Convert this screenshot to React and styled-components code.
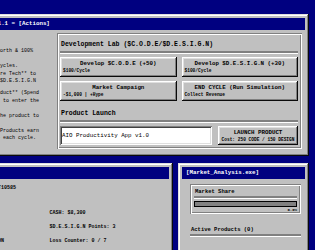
import React from "react";
import styled, { createGlobalStyle } from "styled-components";

const GlobalStyle = createGlobalStyle`
  *, *::before, *::after { box-sizing: border-box; }
  html, body { margin: 0; padding: 0; background: #000080; }
  body { font-family: "Liberation Mono", "DejaVu Sans Mono", monospace; color: #000; }
`;

const Desktop = styled.main`
  width: 315px;
  height: 250px;
  overflow: hidden;
  background: #000080;
  padding-top: 14px;
`;

const Stage = styled.div`
  width: 386px;
  margin-left: -77px;
  display: flex;
  flex-direction: column;
  gap: 7px;
`;

const BottomRow = styled.div`
  display: grid;
  grid-template-columns: 1fr 131px;
  gap: 5px;
  align-items: start;
`;

const Window = styled.section`
  background: #c0c0c0;
  padding: 4px;
  min-height: ${(p) => p.$minH || 0}px;
  box-shadow: inset -1px -1px #0a0a0a, inset 1px 1px #dfdfdf,
    inset -2px -2px #808080, inset 2px 2px #ffffff;
`;

const TitleBar = styled.header`
  height: 12px;
  background: #000080;
  color: #fff;
  display: flex;
  align-items: center;
  gap: 3px;
  padding: 0 4px;
  font-size: 5.8px;
  font-weight: bold;
  line-height: 12px;
  white-space: nowrap;
  overflow: hidden;
`;

const TopBody = styled.div`
  padding: 3px;
  display: grid;
  grid-template-columns: 1fr 245px;
  gap: 3px;
`;

const Manual = styled.div`
  padding-left: 4px;
  font-size: 5px;
  line-height: 7.5px;
  overflow: hidden;
`;

const ManualPara = styled.p`
  margin: 0 0 4.5px;
  white-space: pre;
`;

const Panel = styled.div`
  padding: ${(p) => p.$pad};
  box-shadow: inset 1px 1px #808080, inset -1px -1px #ffffff,
    inset 2px 2px #ffffff, inset -2px -2px #808080;
`;

const SectionTitle = styled.h3`
  margin: ${(p) => p.$mt || 0}px 0 ${(p) => p.$mb ?? 4}px;
  padding: 0 0 ${(p) => p.$pb ?? 2}px 1px;
  font-size: ${(p) => p.$size || 6.5}px;
  line-height: ${(p) => p.$lh || 9}px;
  font-weight: bold;
  white-space: nowrap;
  border-bottom: 2px solid #808080;
  box-shadow: 0 1px 0 #ffffff;
`;

const ButtonGrid = styled.div`
  display: grid;
  grid-template-columns: 1fr 1fr;
  gap: 4px 5px;
`;

const Button = styled.button`
  all: unset;
  box-sizing: border-box;
  height: ${(p) => p.$h || 20}px;
  padding: 3px 3px;
  display: flex;
  flex-direction: column;
  background: #c0c0c0;
  font-family: "Liberation Mono", "DejaVu Sans Mono", monospace;
  color: #000;
  cursor: pointer;
  box-shadow: inset -1px -1px #0a0a0a, inset 1px 1px #ffffff,
    inset -2px -2px #808080, inset 2px 2px #dfdfdf;
`;

const ButtonLabel = styled.span`
  font-size: 5.8px;
  line-height: 8px;
  font-weight: bold;
  text-align: center;
  white-space: nowrap;
`;

const ButtonNote = styled.span`
  font-size: 4.5px;
  line-height: 6px;
  font-weight: bold;
  text-align: ${(p) => p.$align || "left"};
  white-space: nowrap;
`;

const LaunchRow = styled.div`
  display: grid;
  grid-template-columns: 1fr 80px;
  gap: 6px;
`;

const NameField = styled.input`
  height: 19px;
  width: 100%;
  border: none;
  outline: none;
  background: #ffffff;
  padding: 0 2px;
  font-family: "Liberation Mono", "DejaVu Sans Mono", monospace;
  font-size: 5.8px;
  color: #000;
  box-shadow: inset 1px 1px #808080, inset -1px -1px #ffffff,
    inset 2px 2px #404040, inset -2px -2px #dfdfdf;
`;

const StatsBody = styled.div`
  padding: 5px 2px 0 5px;
  font-size: 5px;
  line-height: 8px;
  font-weight: bold;
  white-space: nowrap;
`;

const StatsGrid = styled.div`
  margin-top: 17px;
  display: grid;
  grid-template-columns: 1fr 1fr;
  row-gap: 6px;
`;

const MarketBody = styled.div`
  padding: 5px 4px 0 8px;
`;

const Meter = styled.div`
  height: 6px;
  background: #808080;
  border: 1px solid #000;
`;

const MeterFill = styled.div`
  height: 100%;
  background: #000080;
`;

const MeterValue = styled.div`
  font-size: 4px;
  line-height: 6px;
  font-weight: bold;
  text-align: right;
`;

const WinIcon = () => (
  <svg width="8" height="8" viewBox="0 0 8 8" aria-hidden="true">
    <rect x="0.5" y="0.5" width="7" height="7" fill="#c0c0c0" stroke="#fff" />
    <rect x="1.5" y="2.5" width="5" height="4" fill="#008080" />
  </svg>
);

const paraOne = [
  "README.TXT",
  "----------",
  "Goal: reach $10M net worth & 100%",
  "market share.",
  "You have a max of 50 cycles.",
  "1. Use cash to **Acquire Tech** to",
  "   build $C.O.D.E and $D.E.S.I.G.N",
].join("\n");

const paraTwo = [
  "2. Do the **Launch Product** (Spend",
  "   code & design pts.) to enter the",
  "   market.",
  "3. Choose a name for the product to",
  "   release it.",
  "4. Once launched, all Products earn",
  "   cash revenue & hype each cycle.",
].join("\n");

const actions = [
  { label: "Develop $C.O.D.E (+50)", note: "$100/Cycle" },
  { label: "Develop $D.E.S.I.G.N (+30)", note: "$100/Cycle" },
  { label: "Market Campaign", note: "-$1,000 | +Hype" },
  { label: "END CYCLE (Run Simulation)", note: "Collect Revenue" },
];

const stats = [
  ["Cycle: 1", "CASH: $8,300"],
  ["$C.O.D.E Points: 5", "$D.E.S.I.G.N Points: 3"],
  ["Phase: STEALTH OPERATION", "Loss Counter: 0 / 7"],
];

export default function App() {
  const share = 0;
  return (
    <>
      <GlobalStyle />
      <Desktop>
        <Stage>
          <Window>
            <TitleBar>
              <WinIcon />
              <span>Startup_Tycoon_v1.1 = [Actions]</span>
            </TitleBar>
            <TopBody>
              <Manual>
                <ManualPara>{paraOne}</ManualPara>
                <ManualPara>{paraTwo}</ManualPara>
              </Manual>
              <Panel $pad="7px 4px 4px 3px">
                <SectionTitle>Development Lab ($C.O.D.E/$D.E.S.I.G.N)</SectionTitle>
                <ButtonGrid>
                  {actions.map((a) => (
                    <Button key={a.label}>
                      <ButtonLabel>{a.label}</ButtonLabel>
                      <ButtonNote>{a.note}</ButtonNote>
                    </Button>
                  ))}
                </ButtonGrid>
                <SectionTitle $mt={8}>Product Launch</SectionTitle>
                <LaunchRow>
                  <NameField readOnly value="AIO Productivity App v1.0" />
                  <Button $h={19}>
                    <ButtonLabel>LAUNCH PRODUCT</ButtonLabel>
                    <ButtonNote $align="center">Cost: 250 CODE / 150 DESIGN</ButtonNote>
                  </Button>
                </LaunchRow>
              </Panel>
            </TopBody>
          </Window>
          <BottomRow>
            <Window $minH={120}>
              <TitleBar>
                <WinIcon />
                <span>[Dashboard.exe]</span>
              </TitleBar>
              <StatsBody>
                <div>Session ID: #SIM-2024-T10585</div>
                <StatsGrid>
                  {stats.map(([a, b]) => (
                    <React.Fragment key={b}>
                      <div>{a}</div>
                      <div>{b}</div>
                    </React.Fragment>
                  ))}
                </StatsGrid>
              </StatsBody>
            </Window>
            <Window $minH={120}>
              <TitleBar>
                <span>[Market_Analysis.exe]</span>
              </TitleBar>
              <MarketBody>
                <Panel $pad="4px 4px 1px 4px">
                  <SectionTitle $size={5.5} $lh={8} $pb={0} $mb={3}>
                    Market Share
                  </SectionTitle>
                  <Meter>
                    <MeterFill style={{ width: `${share}%` }} />
                  </Meter>
                  <MeterValue>{share.toFixed(1)}%</MeterValue>
                </Panel>
                <SectionTitle $size={5.5} $lh={8} $pb={0} $mt={12}>
                  Active Products (0)
                </SectionTitle>
              </MarketBody>
            </Window>
          </BottomRow>
        </Stage>
      </Desktop>
    </>
  );
}
